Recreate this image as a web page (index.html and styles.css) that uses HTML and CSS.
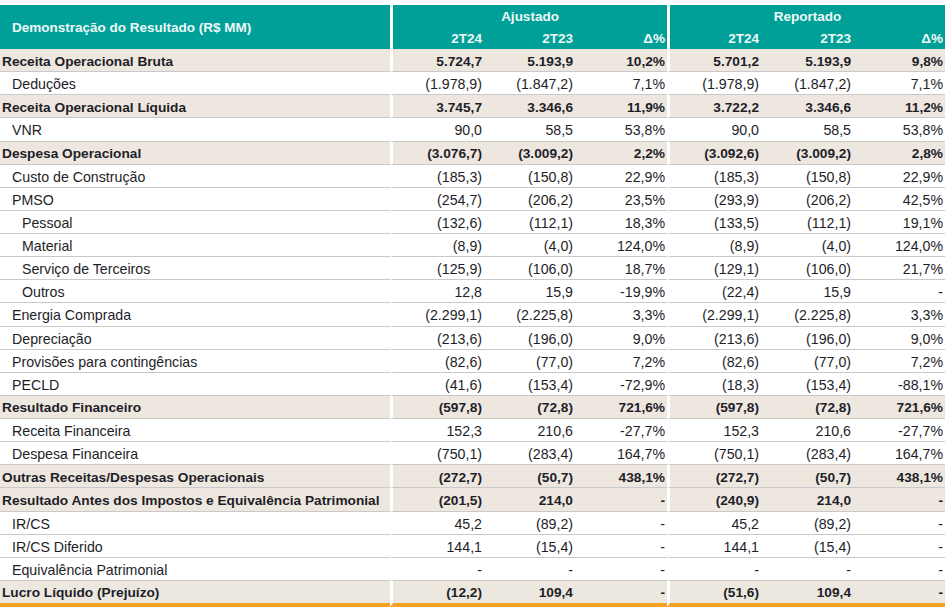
FILE: index.html
```html
<!DOCTYPE html>
<html lang="pt-BR">
<head>
<meta charset="utf-8">
<title>Demonstração do Resultado</title>
<link rel="stylesheet" href="styles.css">
</head>
<body>
<table class="dre">
  <colgroup>
    <col class="c-label">
    <col class="c-first">
    <col class="c-mid">
    <col class="c-last">
    <col class="c-first">
    <col class="c-mid2">
    <col class="c-last">
  </colgroup>
  <thead>
    <tr class="h1">
      <th class="title" rowspan="2">Demonstração do Resultado (R$ MM)</th>
      <th class="grp g" colspan="3">Ajustado</th>
      <th class="grp g" colspan="3">Reportado</th>
    </tr>
    <tr class="h2">
      <th class="g">2T24</th><th>2T23</th><th>Δ%</th>
      <th class="g">2T24</th><th>2T23</th><th>Δ%</th>
    </tr>
  </thead>
  <tbody>
    <tr class="total"><td class="lbl">Receita Operacional Bruta</td><td class="g">5.724,7</td><td>5.193,9</td><td>10,2%</td><td class="g">5.701,2</td><td>5.193,9</td><td>9,8%</td></tr>
    <tr><td class="lbl l1">Deduções</td><td class="g">(1.978,9)</td><td>(1.847,2)</td><td>7,1%</td><td class="g">(1.978,9)</td><td>(1.847,2)</td><td>7,1%</td></tr>
    <tr class="total"><td class="lbl">Receita Operacional Líquida</td><td class="g">3.745,7</td><td>3.346,6</td><td>11,9%</td><td class="g">3.722,2</td><td>3.346,6</td><td>11,2%</td></tr>
    <tr><td class="lbl l1">VNR</td><td class="g">90,0</td><td>58,5</td><td>53,8%</td><td class="g">90,0</td><td>58,5</td><td>53,8%</td></tr>
    <tr class="total"><td class="lbl">Despesa Operacional</td><td class="g">(3.076,7)</td><td>(3.009,2)</td><td>2,2%</td><td class="g">(3.092,6)</td><td>(3.009,2)</td><td>2,8%</td></tr>
    <tr><td class="lbl l1">Custo de Construção</td><td class="g">(185,3)</td><td>(150,8)</td><td>22,9%</td><td class="g">(185,3)</td><td>(150,8)</td><td>22,9%</td></tr>
    <tr><td class="lbl l1">PMSO</td><td class="g">(254,7)</td><td>(206,2)</td><td>23,5%</td><td class="g">(293,9)</td><td>(206,2)</td><td>42,5%</td></tr>
    <tr><td class="lbl l2">Pessoal</td><td class="g">(132,6)</td><td>(112,1)</td><td>18,3%</td><td class="g">(133,5)</td><td>(112,1)</td><td>19,1%</td></tr>
    <tr><td class="lbl l2">Material</td><td class="g">(8,9)</td><td>(4,0)</td><td>124,0%</td><td class="g">(8,9)</td><td>(4,0)</td><td>124,0%</td></tr>
    <tr><td class="lbl l2">Serviço de Terceiros</td><td class="g">(125,9)</td><td>(106,0)</td><td>18,7%</td><td class="g">(129,1)</td><td>(106,0)</td><td>21,7%</td></tr>
    <tr><td class="lbl l2">Outros</td><td class="g">12,8</td><td>15,9</td><td>-19,9%</td><td class="g">(22,4)</td><td>15,9</td><td>-</td></tr>
    <tr><td class="lbl l1">Energia Comprada</td><td class="g">(2.299,1)</td><td>(2.225,8)</td><td>3,3%</td><td class="g">(2.299,1)</td><td>(2.225,8)</td><td>3,3%</td></tr>
    <tr><td class="lbl l1">Depreciação</td><td class="g">(213,6)</td><td>(196,0)</td><td>9,0%</td><td class="g">(213,6)</td><td>(196,0)</td><td>9,0%</td></tr>
    <tr><td class="lbl l1">Provisões para contingências</td><td class="g">(82,6)</td><td>(77,0)</td><td>7,2%</td><td class="g">(82,6)</td><td>(77,0)</td><td>7,2%</td></tr>
    <tr><td class="lbl l1">PECLD</td><td class="g">(41,6)</td><td>(153,4)</td><td>-72,9%</td><td class="g">(18,3)</td><td>(153,4)</td><td>-88,1%</td></tr>
    <tr class="total"><td class="lbl">Resultado Financeiro</td><td class="g">(597,8)</td><td>(72,8)</td><td>721,6%</td><td class="g">(597,8)</td><td>(72,8)</td><td>721,6%</td></tr>
    <tr><td class="lbl l1">Receita Financeira</td><td class="g">152,3</td><td>210,6</td><td>-27,7%</td><td class="g">152,3</td><td>210,6</td><td>-27,7%</td></tr>
    <tr><td class="lbl l1">Despesa Financeira</td><td class="g">(750,1)</td><td>(283,4)</td><td>164,7%</td><td class="g">(750,1)</td><td>(283,4)</td><td>164,7%</td></tr>
    <tr class="total"><td class="lbl">Outras Receitas/Despesas Operacionais</td><td class="g">(272,7)</td><td>(50,7)</td><td>438,1%</td><td class="g">(272,7)</td><td>(50,7)</td><td>438,1%</td></tr>
    <tr class="total"><td class="lbl">Resultado Antes dos Impostos e Equivalência Patrimonial</td><td class="g">(201,5)</td><td>214,0</td><td>-</td><td class="g">(240,9)</td><td>214,0</td><td>-</td></tr>
    <tr><td class="lbl l1">IR/CS</td><td class="g">45,2</td><td>(89,2)</td><td>-</td><td class="g">45,2</td><td>(89,2)</td><td>-</td></tr>
    <tr><td class="lbl l1">IR/CS Diferido</td><td class="g">144,1</td><td>(15,4)</td><td>-</td><td class="g">144,1</td><td>(15,4)</td><td>-</td></tr>
    <tr><td class="lbl l1">Equivalência Patrimonial</td><td class="g">-</td><td>-</td><td>-</td><td class="g">-</td><td>-</td><td>-</td></tr>
    <tr class="total final"><td class="lbl">Lucro Líquido (Prejuízo)</td><td class="g">(12,2)</td><td>109,4</td><td>-</td><td class="g">(51,6)</td><td>109,4</td><td>-</td></tr>
  </tbody>
</table>
</body>
</html>
```

FILE: styles.css
```css
html, body {
  margin: 0;
  padding: 0;
  background: #ffffff;
}

body {
  padding-top: 5px;
  font-family: "Liberation Sans", Arial, sans-serif;
  color: #1e1e28;
}

.dre {
  width: 945px;
  table-layout: fixed;
  border-collapse: separate;
  border-spacing: 0;
}

.c-label { width: 390px; }
.c-first { width: 94px; }
.c-mid { width: 91px; }
.c-mid2 { width: 92px; }
.c-last { width: 92px; }

.dre th,
.dre td {
  box-sizing: border-box;
  padding: 0 2px 0 0;
  text-align: right;
  white-space: nowrap;
  vertical-align: middle;
}

.dre thead th {
  background: #00a099;
  color: #eef8f6;
  font-size: 13.5px;
  font-weight: bold;
  height: 22px;
}

.dre thead th.title {
  text-align: left;
  padding-left: 12px;
}

.dre thead th.grp {
  text-align: center;
  padding: 0;
}

.dre .g {
  border-left: 3px solid #ffffff;
}

.dre tbody td {
  height: 23.125px;
  padding-top: 2px;
  font-size: 14.2px;
  border-bottom: 1px solid #c9c9c9;
}

.dre tbody .lbl {
  text-align: left;
  padding-left: 12px;
}

.dre tbody .l2 {
  padding-left: 22px;
}

.dre tbody tr.total td {
  background: #eee7e0;
  font-weight: bold;
  font-size: 13.7px;
}

.dre tbody tr.total .lbl {
  padding-left: 2px;
}

.dre tbody tr.final td {
  background: #ece8df;
  height: 26.125px;
  border-bottom: 4px solid #f5a124;
}
```
